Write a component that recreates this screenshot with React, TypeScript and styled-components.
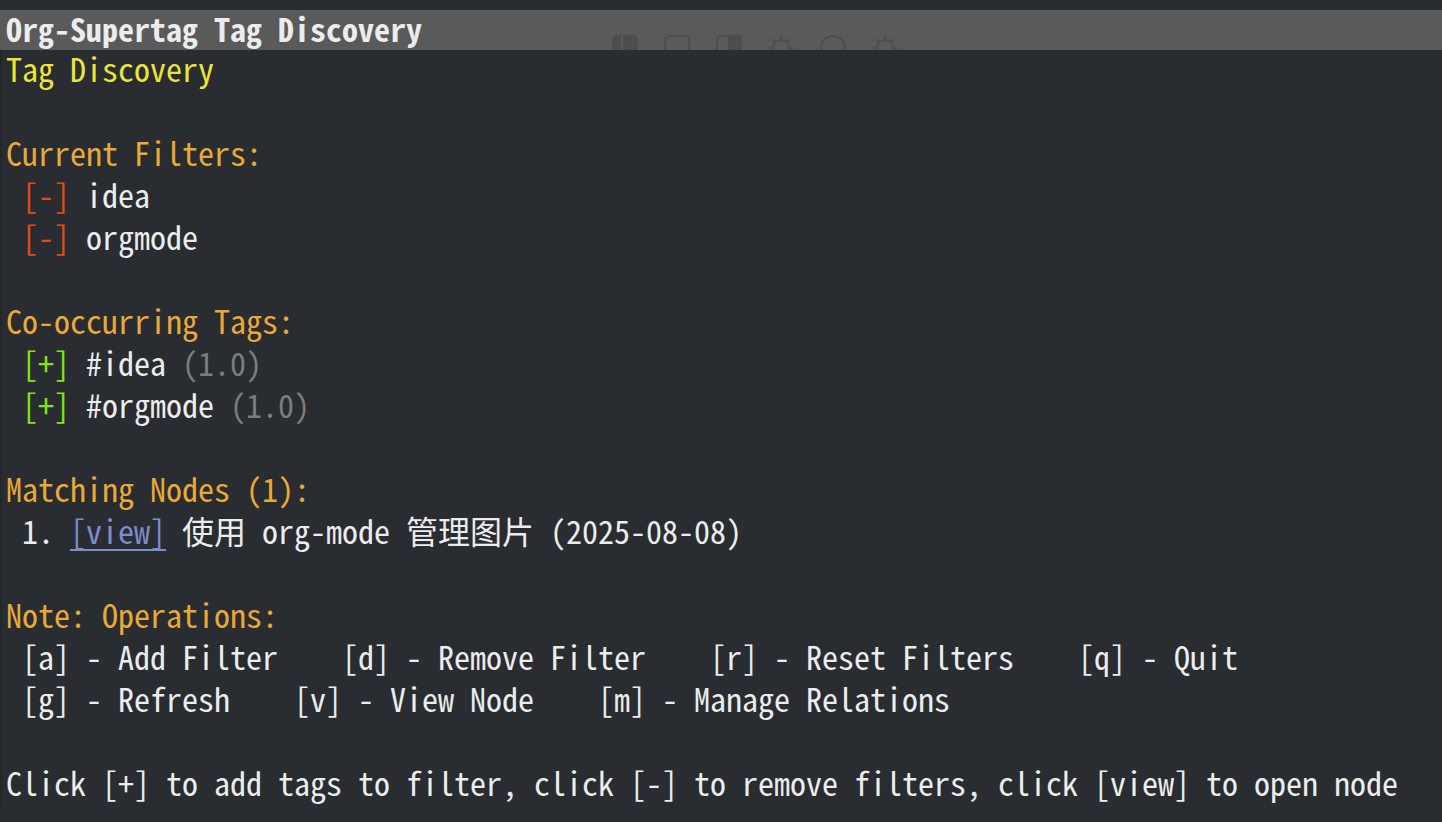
import React from 'react';
import styled, { createGlobalStyle } from 'styled-components';

const Global = createGlobalStyle`
  html, body {
    margin: 0;
    padding: 0;
    background: #292c30;
  }
`

const MONO = `"Noto Sans Mono CJK SC", "DejaVu Sans Mono", monospace`

const Frame = styled.div`
  width: 1442px;
  height: 822px;
  overflow: hidden;
  background: #292c30;
  padding-top: 10px;
  box-sizing: border-box;
  font-family: ${MONO};
  font-size: 32px;
`

const TitleBar = styled.div`
  height: 40px;
  box-sizing: border-box;
  display: flex;
  align-items: center;
  background: #5a5a5a;
  padding: 0 0 4px 6px;
`

const Title = styled.span`
  color: #ececec;
  font-weight: 700;
  white-space: pre;
  line-height: 36px;
`

const GhostIcons = styled.div`
  display: flex;
  gap: 22px;
  align-self: flex-end;
  height: 17px;
  margin-bottom: -4px;
  overflow: hidden;
  margin-left: 188px;
  opacity: 0.3;
`

const Buffer = styled.div`
  border-left: 2px solid #24272a;
  padding-left: 4px;
`

type Tone = 'text' | 'title' | 'heading' | 'red' | 'green' | 'dim' | 'link'

const colors: Record<Tone, string> = {
  text: '#ececec',
  title: '#ede43a',
  heading: '#e9a936',
  red: '#e4481a',
  green: '#7fe514',
  dim: '#7c7c7c',
  link: '#7b8dcd',
}

const Line = styled.div<{ $tone?: Tone }>`
  height: 42px;
  line-height: 36px;
  white-space: pre;
  color: ${(p) => colors[p.$tone || 'text']};
`

const Tok = styled.span<{ $tone: Tone }>`
  color: ${(p) => colors[p.$tone]};
  ${(p) => p.$tone === 'link' && `
    text-decoration: underline;
    text-underline-offset: 5px;
    text-decoration-thickness: 2px;
  `}
`

const Ghost = ({ kind }: { kind: number }) => {
  const c = '#2f3236'
  return (
    <svg width="30" height="30" viewBox="0 0 30 30" fill="none" stroke={c} strokeWidth="2">
      {kind === 0 && <><rect x="3" y="3" width="24" height="24" rx="4" fill={c} /><line x1="12" y1="3" x2="12" y2="27" stroke="#5a5a5a" /></>}
      {kind === 1 && <rect x="3" y="3" width="24" height="24" rx="4" />}
      {kind === 2 && <><rect x="3" y="3" width="24" height="24" rx="4" /><rect x="15" y="3" width="12" height="24" fill={c} /></>}
      {(kind === 3 || kind === 5) && <><circle cx="15" cy="15" r="8" /><path d="M15 2v6M15 22v6M2 15h6M22 15h6M6 6l4 4M20 20l4 4M24 6l-4 4M6 24l4-4" /></>}
      {kind === 4 && <circle cx="15" cy="15" r="12" />}
    </svg>
  )
}

const ops1 = ' [a] - Add Filter    [d] - Remove Filter    [r] - Reset Filters    [q] - Quit'
const ops2 = ' [g] - Refresh    [v] - View Node    [m] - Manage Relations'
const hint = 'Click [+] to add tags to filter, click [-] to remove filters, click [view] to open node'

export default function App() {
  return (
    <Frame>
      <Global />
      <TitleBar>
        <Title>Org-Supertag Tag Discovery</Title>
        <GhostIcons>
          {[0, 1, 2, 3, 4, 5].map((k) => <Ghost key={k} kind={k} />)}
        </GhostIcons>
      </TitleBar>
      <Buffer>
        <Line $tone="title">Tag Discovery</Line>
        <Line> </Line>
        <Line $tone="heading">Current Filters:</Line>
        <Line> <Tok $tone="red">[-]</Tok> idea</Line>
        <Line> <Tok $tone="red">[-]</Tok> orgmode</Line>
        <Line> </Line>
        <Line $tone="heading">Co-occurring Tags:</Line>
        <Line> <Tok $tone="green">[+]</Tok> #idea <Tok $tone="dim">(1.0)</Tok></Line>
        <Line> <Tok $tone="green">[+]</Tok> #orgmode <Tok $tone="dim">(1.0)</Tok></Line>
        <Line> </Line>
        <Line $tone="heading">Matching Nodes (1):</Line>
        <Line> 1. <Tok $tone="link">[view]</Tok> 使用 org-mode 管理图片 (2025-08-08)</Line>
        <Line> </Line>
        <Line $tone="heading">Note: Operations:</Line>
        <Line>{ops1}</Line>
        <Line>{ops2}</Line>
        <Line> </Line>
        <Line>{hint}</Line>
      </Buffer>
    </Frame>
  );
}
